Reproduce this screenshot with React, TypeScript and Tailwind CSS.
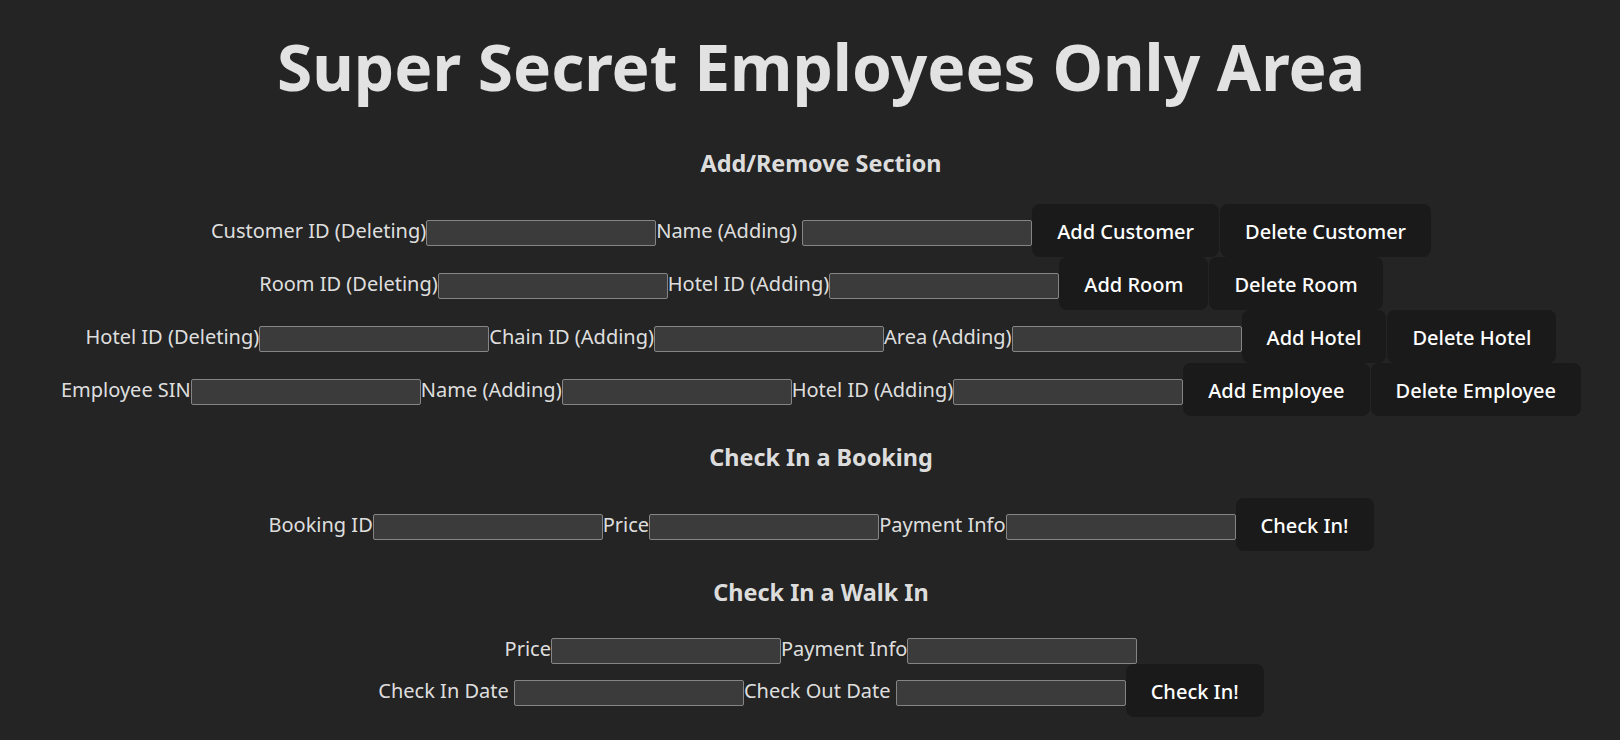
import React from "react";

function Field() {
  return (
    <input
      type="text"
      className="mt-[5px] h-[26px] w-[230px] shrink-0 rounded-[2px] border border-[#858585] bg-[#3b3b3b] px-[2px] text-[13px] text-white outline-none"
    />
  );
}

function Label({ children }: { children: React.ReactNode }) {
  return <span className="relative top-[1px] whitespace-pre">{children}</span>;
}

function Btn({ children, first }: { children: React.ReactNode; first?: boolean }) {
  return (
    <button
      className={
        first
          ? "shrink-0 rounded-[8px] border border-transparent bg-[#1a1a1a] px-[24px] py-[12px] text-[20px] font-medium leading-[normal] text-white"
          : "ml-[1px] shrink-0 rounded-[8px] border border-transparent bg-[#1a1a1a] px-[24px] py-[12px] text-[20px] font-medium leading-[normal] text-white"
      }
    >
      <span className="relative top-[1px]">{children}</span>
    </button>
  );
}

function Row({ children }: { children: React.ReactNode }) {
  return <div className="flex items-center justify-center whitespace-nowrap">{children}</div>;
}

function Heading({ children }: { children: React.ReactNode }) {
  return <h3 className="relative top-[1px] mt-[23.4px] text-[23.4px] font-bold leading-[1.5]">{children}</h3>;
}

export default function App() {
  return (
    <div className="min-h-[740px] w-full bg-[#242424] font-['Noto_Sans',sans-serif] text-[20px] leading-[1.5] text-[rgba(255,255,255,0.87)]">
      <div className="flex flex-col items-center pl-[22px] pt-[32px] text-center">
        <h1 className="text-[64px] font-bold leading-[1.1]">Super Secret Employees Only Area</h1>
        <h3 className="relative top-[1px] mt-[42.88px] text-[23.4px] font-bold leading-[1.5]">Add/Remove Section</h3>
        <div className="mt-[23.4px] flex flex-col">
          <Row>
            <Label>Customer ID (Deleting)</Label>
            <Field />
            <Label>Name (Adding) </Label>
            <Field />
            <Btn first>Add Customer</Btn>
            <Btn>Delete Customer</Btn>
          </Row>
          <Row>
            <Label>Room ID (Deleting)</Label>
            <Field />
            <Label>Hotel ID (Adding)</Label>
            <Field />
            <Btn first>Add Room</Btn>
            <Btn>Delete Room</Btn>
          </Row>
          <Row>
            <Label>Hotel ID (Deleting)</Label>
            <Field />
            <Label>Chain ID (Adding)</Label>
            <Field />
            <Label>Area (Adding)</Label>
            <Field />
            <Btn first>Add Hotel</Btn>
            <Btn>Delete Hotel</Btn>
          </Row>
          <Row>
            <Label>Employee SIN</Label>
            <Field />
            <Label>Name (Adding)</Label>
            <Field />
            <Label>Hotel ID (Adding)</Label>
            <Field />
            <Btn first>Add Employee</Btn>
            <Btn>Delete Employee</Btn>
          </Row>
        </div>
        <Heading>Check In a Booking</Heading>
        <div className="mt-[23.4px] flex flex-col">
          <Row>
            <Label>Booking ID</Label>
            <Field />
            <Label>Price</Label>
            <Field />
            <Label>Payment Info</Label>
            <Field />
            <Btn first>Check In!</Btn>
          </Row>
        </div>
        <Heading>Check In a Walk In</Heading>
        <div className="mt-[23.4px] flex flex-col">
          <Row>
            <Label>Price</Label>
            <Field />
            <Label>Payment Info</Label>
            <Field />
          </Row>
          <Row>
            <Label>Check In Date </Label>
            <Field />
            <Label>Check Out Date </Label>
            <Field />
            <Btn first>Check In!</Btn>
          </Row>
        </div>
      </div>
    </div>
  );
}
